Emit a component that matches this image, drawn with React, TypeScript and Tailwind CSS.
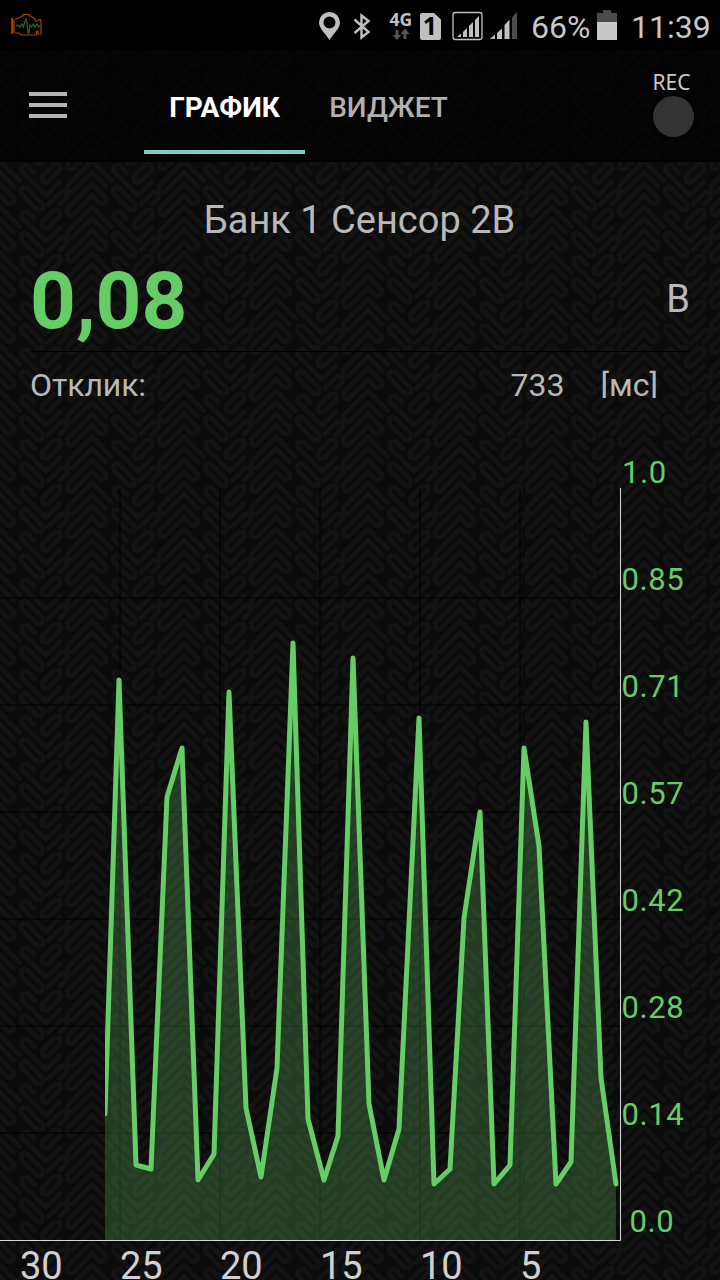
const GREEN = '#66cc66';

// [x, y] in chart pixels, baseline of the chart is y = 810
const points: [number, number][] = [
  [105, 684], [119, 250], [136, 735], [151, 739], [167, 367], [182, 318],
  [198, 750], [214, 724], [229, 262], [246, 678], [261, 747], [277, 638],
  [293, 213], [308, 689], [324, 750], [338, 706], [353, 228], [369, 674],
  [384, 750], [399, 699], [419, 288], [434, 754], [450, 739], [464, 488],
  [480, 382], [494, 754], [510, 735], [524, 318], [539, 416], [556, 754],
  [571, 732], [586, 292], [601, 648], [616, 754],
];

const yLabels = [
  { text: '1.0', x: 622 },
  { text: '0.85', x: 621.5 },
  { text: '0.71', x: 621.5 },
  { text: '0.57', x: 621.5 },
  { text: '0.42', x: 621.5 },
  { text: '0.28', x: 621.5 },
  { text: '0.14', x: 621.5 },
  { text: '0.0', x: 629.5 },
];

const xLabels = ['30', '25', '20', '15', '10', '5'];

// woven diagonals on an 8 x 4 lattice, one lattice unit is 11.5px
const weave = [
  'M0 0L1.2 1.2Q1.3 1.8 .7 1.7L0 1',
  'M0 2L1.7 3.7M0 3L1.2 4.2',
  'M2.3 .3L3.7 1.7Q3.9 2.4 3.2 2.200L1.900 .9Q1.700 .2 2.300 .3z',
  'M4 5L1.900 2.900Q1.800 2.300 2.400 2.400L3 3',
  'M3.700 3.300L4.700 2.300Q5.400 2.100 5.200 2.800L4.200 3.800Q3.500 4 3.700 3.300z',
  'M4.200 1.800L5.300 .7Q5.900 .6 5.800 1.200L5.200 1.800',
  'M8 0L5.900 2.100Q5.700 2.800 6.300 2.700L8 1',
  'M8 2L5.900 4.100Q5.700 4.800 6.300 4.700L8 3',
  'M4.100 .9L5.200 -.2',
].join('');

function Backdrop() {
  return (
    <svg className="absolute inset-0 h-full w-full" aria-hidden="true">
      <defs>
        <pattern id="weave" width="92" height="46" patternUnits="userSpaceOnUse">
          <rect width="92" height="46" fill="#0b0b0b" />
          <g transform="scale(11.5)" fill="none" stroke="#131313" strokeWidth="0.4" strokeLinecap="round" strokeLinejoin="round">
            <path d={weave} />
            <path d={weave} transform="translate(0 -4)" />
            <path d={weave} transform="translate(0 4)" />
          </g>
        </pattern>
      </defs>
      <rect width="100%" height="100%" fill="url(#weave)" />
    </svg>
  );
}

function EngineIcon() {
  return (
    <svg className="ml-[11px] h-6 w-8" viewBox="0 0 32 24" fill="none">
      <path d="M1.2 5v16" stroke="#a84300" strokeWidth="2" />
      <path
        d="M3 6.500V20M3 12H1M4 6l4-1 3-2h1V1.500h6V3h2l4 3v2h2l2-1.500h1.500L30 8v13h-3v-3h-1.500v4H10l-2-2H4"
        stroke="#a84300"
        strokeWidth="1.200"
      />
      <path d="M5 13l2-1 2 2 2-3 1.500 3 2-8 1 0 1.500 14h1l1-8 1.500 2 2-3 1.500 3 2-3 1.500 3 1.500-2" stroke="#28692e" strokeWidth="1.200" />
    </svg>
  );
}

function StatusIcons() {
  return (
    <svg className="h-[50px] w-[220px]" viewBox="300 0 220 50" fill="#c0c0c0">
      {/* location */}
      <path fillRule="evenodd" d="M329.500 12a10.500 10.500 0 0 0-10.500 10.500c0 6 6.500 11 10.500 17.500 4-6.500 10.500-11.500 10.500-17.500A10.500 10.500 0 0 0 329.500 12zm0 4.500a6 6 0 1 1 0 12 6 6 0 0 1 0-12z" />
      {/* bluetooth */}
      <path d="M354.500 19.500l14 12.500-7 5.500v-22l7 5.500-14 12" fill="none" stroke="#c0c0c0" strokeWidth="2.400" />
      {/* mobile data */}
      <text x="389.500" y="26" fontSize="17.500" fontWeight="700" className="font-['Noto_Sans',sans-serif]">4G</text>
      <path d="M395.500 30h3v5h3l-4.500 5-4.500-5h3zM403.500 39h3v-5h3l-4.500-5.500-4.500 5.500h3z" fill="#555" />
      {/* sim card */}
      <path d="M422 13h12l7 6.500V38q0 2-2 2h-17q-2 0-2-2V15q0-2 2-2z" />
      <text x="430" y="35" textAnchor="middle" fontSize="25" fontWeight="700" fill="#000" className="font-['Noto_Sans',sans-serif]">1</text>
      {/* signal, first sim */}
      <rect x="453" y="12.500" width="29" height="27" rx="2.500" fill="none" stroke="#c0c0c0" strokeWidth="1.300" />
      <path d="M457 37l4-3.500V37zM463 32l4-4v9h-4zM469 26l4-4v15h-4zM475 20l4-4v21h-4z" />
      {/* signal, second sim */}
      <path d="M490 39l5-4.500V39zM497 33l5-4.500V39h-5zM504.500 25l5-5.500V39h-5z" />
      <path d="M512 17.500l5-5.500v27h-5z" fill="#4c4c4c" />
    </svg>
  );
}

function StatusBar() {
  return (
    <div className="flex h-[50px] items-center bg-black text-[32px] leading-none text-[#c8c8c8]">
      <EngineIcon />
      <div className="ml-[257px]">
        <StatusIcons />
      </div>
      <span className="ml-[11px] w-[60px] whitespace-nowrap pt-[3px]">66%</span>
      <svg className="ml-1.5 h-[30px] w-5" viewBox="0 0 20 30">
        <path d="M0 3h6V0h8v3h6v9H0z" fill="#4c4c4c" />
        <path d="M0 12h20v18H0z" fill="#c8c8c8" />
      </svg>
      <span className="ml-3.5 whitespace-nowrap pt-[3px]">11:39</span>
    </div>
  );
}

function Header() {
  return (
    <header className="flex h-28 items-start border-b-2 border-black bg-black/70">
      <button className="ml-[29px] mt-[42px] flex w-[38px] flex-col gap-[7px]" aria-label="Меню">
        <span className="h-1 bg-[#b4b4b4]" />
        <span className="h-1 bg-[#b4b4b4]" />
        <span className="h-1 bg-[#b4b4b4]" />
      </button>
      <nav className="ml-[77px] flex text-[28px] leading-[116px]">
        <a className="h-[104px] w-[161px] border-b-4 border-[#80cbc4] text-center font-bold text-white">ГРАФИК</a>
        <a className="h-[104px] w-[167px] text-center font-medium text-[#b0b0b0]">ВИДЖЕТ</a>
      </nav>
      <button className="ml-auto mr-[26px] mt-[21px] flex w-[41px] flex-col items-center">
        <span className="mr-1 font-['Noto_Sans',sans-serif] text-[21px] leading-[22px] text-[#c8c8c8]">REC</span>
        <span className="mt-[3px] size-[41px] rounded-full bg-[#333333] shadow-[0_0_3px_1px_#000]" />
      </button>
    </header>
  );
}

function Reading() {
  return (
    <section className="h-[268px] px-[30px] pt-8 text-[#b8b8b8]">
      <h1 className="mr-px text-center text-[38px] leading-[52px]">Банк 1 Сенсор 2В</h1>
      <div className="flex h-[106px] items-center justify-between border-b border-black">
        <span className="pt-1 text-[80px] font-bold leading-none text-[#66cc66]">0,08</span>
        <span className="pt-0.5 text-[38px]">В</span>
      </div>
      <div className="flex text-[32px] leading-[67px]">
        <span className="tracking-[-0.1px]">Отклик:</span>
        <span className="ml-auto mr-9">733</span>
        <span className="mr-[32px] h-[46px] overflow-hidden">[мс]</span>
      </div>
    </section>
  );
}

function Chart() {
  const line = points.map(([x, y]) => `${x},${y}`).join(' ');

  return (
    <svg className="block h-[850px] w-[720px]" viewBox="0 0 720 850">
      <defs>
        <clipPath id="plot">
          <rect x="105" y="50" width="515" height="760" />
        </clipPath>
      </defs>
      <g stroke="#000" strokeOpacity="0.5" strokeWidth="2">
        {[168, 275, 382, 489, 596, 703].map(y => (
          <line key={y} x1="0" y1={y} x2="620" y2={y} />
        ))}
        {[120, 220, 320, 420, 520].map(x => (
          <line key={x} x1={x} y1="58" x2={x} y2="810" />
        ))}
      </g>
      <g clipPath="url(#plot)">
        <polygon points={`105,810 ${line} 616,810`} fill={GREEN} fillOpacity="0.25" />
        <polyline points={line} fill="none" stroke={GREEN} strokeWidth="5" strokeLinejoin="round" strokeLinecap="round" />
      </g>
      <path d="M620.500 58V810.500H0" fill="none" stroke="#d8d8d8" />
      <g fill={GREEN} fontSize="31" letterSpacing="0.6">
        {yLabels.map((label, i) => (
          <text key={label.text} x={label.x} y={53 + i * 107}>{label.text}</text>
        ))}
      </g>
      <g fill="#d0d0d0" fontSize="38">
        {xLabels.map((label, i) => (
          <text key={label} x={20 + i * 100} y="849">{label}</text>
        ))}
      </g>
    </svg>
  );
}

export default function App() {
  return (
    <div className="relative h-[1280px] w-[720px] overflow-hidden font-[Roboto,sans-serif]">
      <Backdrop />
      <div className="relative flex flex-col">
        <StatusBar />
        <Header />
        <Reading />
        <Chart />
      </div>
    </div>
  );
}
